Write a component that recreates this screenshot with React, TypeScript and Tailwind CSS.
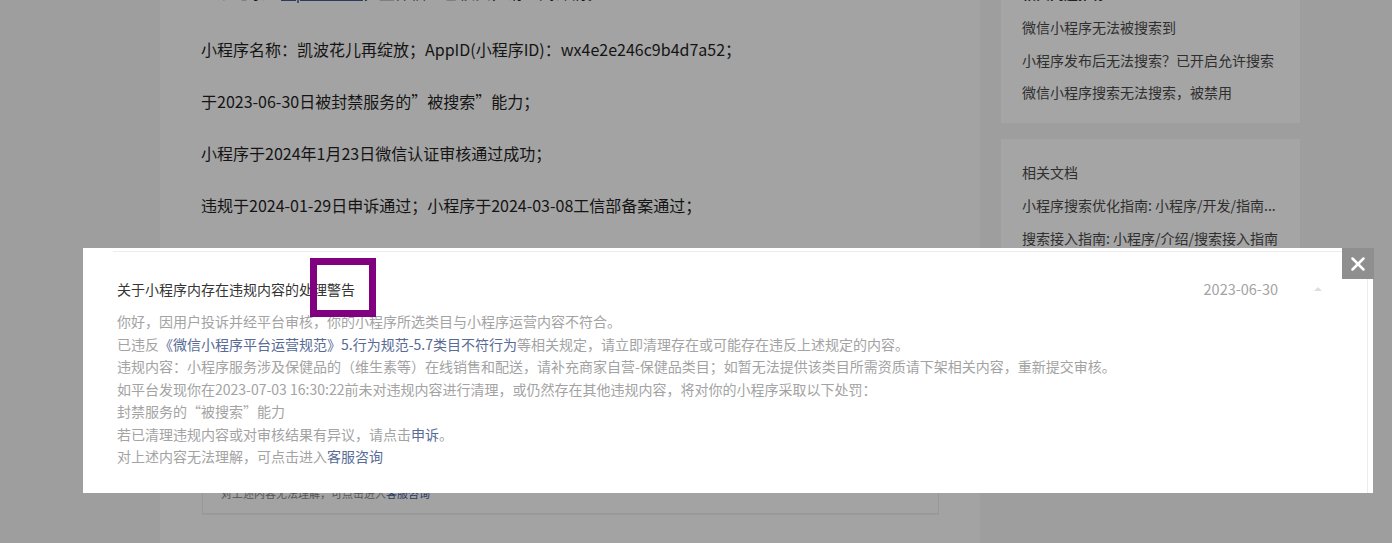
import { X } from "lucide-react";

const font = "font-['Microsoft_YaHei','Noto_Sans_CJK_SC',sans-serif]";

function Article() {
  return (
    <main className="w-[820px] shrink-0 bg-[#a3a3a3] pl-[41px]">
      <div className="-mt-[20px] flex flex-col gap-[28px] text-[16px] leading-[24px] text-[#141414]">
        <p className="mb-[5px]">
          违规记录：<span className="text-[#2c3a63] underline">mp_weixin</span>，主体信息已核实，请查阅详情。
        </p>
        <p>小程序名称：凯波花儿再绽放；AppID(小程序ID)：wx4e2e246c9b4d7a52；</p>
        <p>于2023-06-30日被封禁服务的”被搜索”能力；</p>
        <p>小程序于2024年1月23日微信认证审核通过成功；</p>
        <p>违规于2024-01-29日申诉通过；小程序于2024-03-08工信部备案通过；</p>
      </div>

      {/* 截图框 (大部分被弹窗盖住) */}
      <div className="ml-[1px] mt-[45px] flex h-[252px] w-[737px] flex-col justify-end border border-[#989898] px-[18px] pb-[13px] shadow-[0_1px_0_#9b9b9b]">
        <p className="text-[11px] leading-[14px] text-[#555]">
          对上述内容无法理解，可点击进入<span className="text-[#2c3a63]">客服咨询</span>
        </p>
      </div>
    </main>
  );
}

function Sidebar() {
  const links = ["微信小程序无法被搜索到", "小程序发布后无法搜索？已开启允许搜索", "微信小程序搜索无法搜索，被禁用"];
  const docs = ["小程序搜索优化指南: 小程序/开发/指南...", "搜索接入指南: 小程序/介绍/搜索接入指南", "小程序被搜索能力说明: 小程序/运营"];
  return (
    <aside className="ml-[21px] flex w-[299px] shrink-0 flex-col gap-[16px] text-[14px] leading-[20px] text-[#2f2f2f]">
      <div className="-mt-[30px] flex flex-col bg-[#a5a5a5] pb-[21px] pl-[21px] pt-[13px]">
        <div className="mb-[14px] font-semibold text-[#222]">相关问题推荐</div>
        <div className="flex flex-col gap-[12.5px]">
          {links.map((l) => (
            <div key={l}>{l}</div>
          ))}
        </div>
      </div>
      <div className="flex h-[300px] flex-col gap-[13px] bg-[#a5a5a5] pl-[21px] pt-[23px]">
        <div>相关文档</div>
        {docs.map((d) => (
          <div key={d} className="truncate pr-[10px]">
            {d}
          </div>
        ))}
      </div>
    </aside>
  );
}

function Notice() {
  const blue = "text-[#576b95]";
  return (
    <div className="absolute left-[83px] top-[248px] h-[245px] w-[1290px] bg-white">
      <div className="ml-[30px] mr-[5px] mt-[3px] h-[242px] border-r border-t border-[#ececec] pl-[4px]">
        <div className="flex items-center pt-[27px] text-[14px] leading-[20px]">
          <div className="flex-1 text-[#353535]">关于小程序内存在违规内容的处理警告</div>
          <div className="text-[14.5px] text-[#a3a3a3]">2023-06-30</div>
          <div className="ml-[36px] mr-[45px] h-0 w-0 border-x-[4px] border-b-[4px] border-x-transparent border-b-[#dedede]" />
        </div>
        <div className="mt-[11px] text-[14px] leading-[22.5px] text-[#a3a3a3]">
          <p>你好，因用户投诉并经平台审核，你的小程序所选类目与小程序运营内容不符合。</p>
          <p>
            已违反<span className={blue}>《微信小程序平台运营规范》5.行为规范-5.7类目不符行为</span>
            等相关规定，请立即清理存在或可能存在违反上述规定的内容。
          </p>
          <p>
            违规内容：小程序服务涉及保健品的（维生素等）在线销售和配送，请补充商家自营-保健品类目；如暂无法提供该类目所需资质请下架相关内容，重新提交审核。
          </p>
          <p>如平台发现你在2023-07-03 16:30:22前未对违规内容进行清理，或仍然存在其他违规内容，将对你的小程序采取以下处罚：</p>
          <p>封禁服务的“被搜索”能力</p>
          <p>
            若已清理违规内容或对审核结果有异议，请点击<span className={blue}>申诉</span>。
          </p>
          <p>
            对上述内容无法理解，可点击进入<span className={blue}>客服咨询</span>
          </p>
        </div>
      </div>
    </div>
  );
}

export default function App() {
  return (
    <div className={`relative h-[543px] w-[1392px] overflow-hidden bg-[#9e9e9e] ${font}`}>
      <div className="flex h-full">
        <div className="w-[160px] shrink-0" />
        <Article />
        <Sidebar />
      </div>

      <Notice />

      {/* 关闭按钮 */}
      <button className="absolute left-[1342px] top-[248px] flex h-[31px] w-[32px] items-center justify-center bg-[#8f8f8f]">
        <X className="h-[22px] w-[22px] text-white" strokeWidth={2.8} />
      </button>

      {/* 标注框 */}
      <div className="absolute left-[310px] top-[258px] h-[59px] w-[66px] border-[7px] border-[#800080]" />
    </div>
  );
}
